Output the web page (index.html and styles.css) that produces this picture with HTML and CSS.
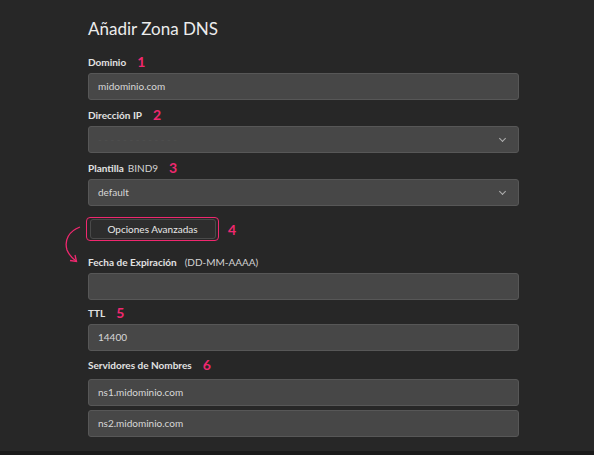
FILE: index.html
```html
<!DOCTYPE html>
<html lang="es">
<head>
    <meta charset="UTF-8">
    <meta name="viewport" content="width=device-width, initial-scale=1.0">
    <title>Añadir Zona DNS</title>
    <link rel="stylesheet" href="styles.css">
</head>
<body>
    <main class="panel">
        <h1 class="title">Añadir Zona DNS</h1>

        <div class="field">
            <label class="label">Dominio <span class="step">1</span></label>
            <div class="input">midominio.com</div>
        </div>

        <div class="field">
            <label class="label">Dirección IP <span class="step">2</span></label>
            <div class="input select"><span class="blur">- - - - - - - - - - - - -</span><span class="chev"></span></div>
        </div>

        <div class="field field-tpl">
            <label class="label">Plantilla <span class="hint">BIND9</span> <span class="step">3</span></label>
            <div class="input select">default<span class="chev"></span></div>
        </div>

        <div class="advanced">
            <div class="outline">
                <button class="btn">Opciones Avanzadas</button>
            </div>
            <span class="step">4</span>
            <svg class="curve" width="26" height="42" viewBox="0 0 26 42">
                <path d="M24 2 C 13 6, 8 15, 11 25 C 13 30, 16 33, 20 36" fill="none" stroke="#f0286f" stroke-width="1.3"/>
                <path d="M14 35.5 L20.5 36.5 L19 30" fill="none" stroke="#f0286f" stroke-width="1.3"/>
            </svg>
        </div>

        <div class="field field-date">
            <label class="label">Fecha de Expiración <span class="hint hint-wide">(DD-MM-AAAA)</span></label>
            <div class="input"></div>
        </div>

        <div class="field field-ttl">
            <label class="label">TTL <span class="step">5</span></label>
            <div class="input">14400</div>
        </div>

        <div class="field field-ns">
            <label class="label">Servidores de Nombres <span class="step">6</span></label>
            <div class="input">ns1.midominio.com</div>
            <div class="input">ns2.midominio.com</div>
        </div>
    </main>
    <div class="bottom-bar"></div>
</body>
</html>
```

FILE: styles.css
```css
body {
    margin: 0;
    padding: 0;
    background-color: #272727;
    font-family: Lato, "Noto Sans", sans-serif;
    color: #e4e4e4;
    height: 455px;
    overflow: hidden;
    position: relative;
}
.panel {
    width: 431px;
    padding: 18px 0 0 88px;
    display: flex;
    flex-direction: column;
}
.title {
    font-size: 17px;
    font-weight: 400;
    line-height: 22px;
    margin: 0 0 14px 0;
    color: #ececec;
}
.field {
    display: flex;
    flex-direction: column;
    gap: 3px;
    margin-bottom: 7px;
}
.label {
    display: flex;
    align-items: center;
    font-size: 10px;
    font-weight: 700;
    line-height: 16px;
    height: 16px;
    color: #e2e2e2;
}
.hint {
    font-weight: 400;
    margin-left: 4px;
    color: #d4d4d4;
}
.hint-wide {
    margin-left: 8px;
}
.step {
    color: #f0286f;
    font-size: 14px;
    font-weight: 700;
    margin-left: 11px;
}
.input {
    height: 25px;
    border: 1px solid #575757;
    border-radius: 3px;
    background-color: #474747;
    font-size: 10px;
    line-height: 25px;
    padding: 0 9px;
    color: #d8d8d8;
    display: flex;
    align-items: center;
    justify-content: space-between;
}
.blur {
    color: #4f4f4f;
}
.chev {
    width: 4px;
    height: 4px;
    border-right: 1px solid #b0b0b0;
    border-bottom: 1px solid #b0b0b0;
    transform: rotate(45deg);
    margin: -3px 4px 0 0;
}
.field-tpl {
    margin-bottom: 11px;
}
.advanced {
    position: relative;
    display: flex;
    align-items: center;
    margin: 0 0 13px -2px;
}
.outline {
    border: 1.5px solid #f0286f;
    border-radius: 4px;
    padding: 1px 2.5px;
}
.btn {
    display: block;
    width: 126px;
    height: 20px;
    background-color: #2d2d2d;
    border: 1px solid #4a4a4a;
    border-radius: 3px;
    color: #e8e8e8;
    font-family: Lato, "Noto Sans", sans-serif;
    font-size: 10px;
    padding: 0;
}
.advanced .step {
    margin-left: 9px;
}
.curve {
    position: absolute;
    left: -30px;
    top: 8px;
}
.field-date {
    margin-bottom: 5px;
}
.field-ttl {
    margin-bottom: 6px;
}
.field-ns {
    gap: 4px;
}
.field-ns .label {
    margin-bottom: 2px;
}
.bottom-bar {
    position: absolute;
    left: 0;
    right: 0;
    bottom: 0;
    height: 4px;
    background-color: #1a1a1a;
}
```
